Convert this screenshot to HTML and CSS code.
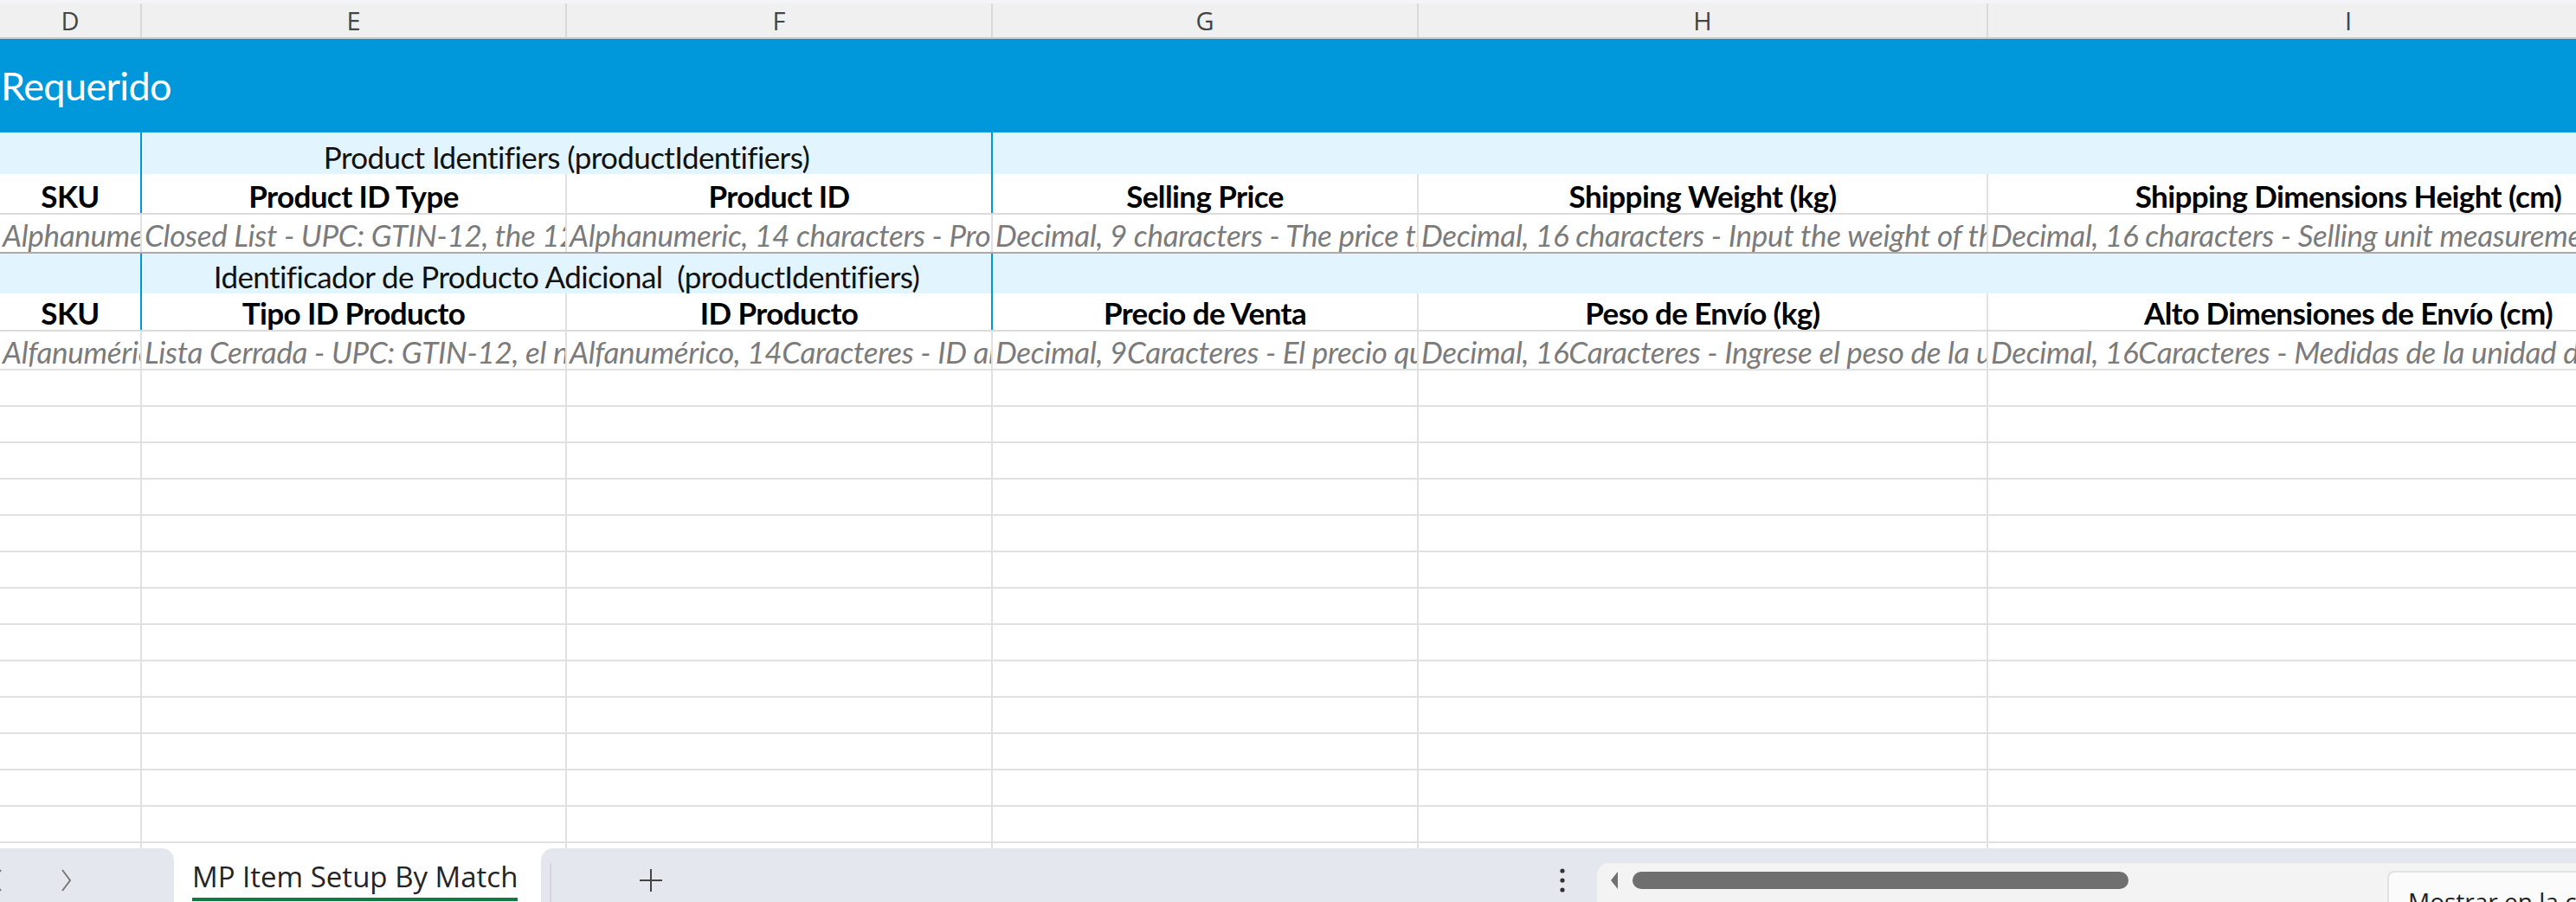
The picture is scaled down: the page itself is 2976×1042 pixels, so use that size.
FILE: index.html
```html
<!DOCTYPE html>
<html>
<head>
  <title>MP Item Setup By Match</title>
  <link rel="stylesheet" href="styles.css">
</head>
<body>

  <div class="sheet">
    <div class="colheads">
      <div class="ch">D</div>
      <div class="ch">E</div>
      <div class="ch">F</div>
      <div class="ch">G</div>
      <div class="ch">H</div>
      <div class="ch">I</div>
    </div>

    <div class="banner">Requerido</div>

    <div class="row group">
      <div class="cell edge"></div>
      <div class="cell span2 edge">Product Identifiers (productIdentifiers)</div>
      <div class="cell span3"></div>
    </div>
    <div class="row head">
      <div class="cell edge">SKU</div>
      <div class="cell">Product ID Type</div>
      <div class="cell edge">Product ID</div>
      <div class="cell">Selling Price</div>
      <div class="cell">Shipping Weight (kg)</div>
      <div class="cell">Shipping Dimensions Height (cm)</div>
    </div>
    <div class="row desc first">
      <div class="cell">Alphanumeric, 50 characters - A unique identifier for the item</div>
      <div class="cell">Closed List - UPC: GTIN-12, the 12-digit number including check-digit</div>
      <div class="cell">Alphanumeric, 14 characters - Product ID of the item</div>
      <div class="cell">Decimal, 9 characters - The price the customer pays for the product</div>
      <div class="cell">Decimal, 16 characters - Input the weight of the item in kilograms</div>
      <div class="cell">Decimal, 16 characters - Selling unit measurements, height of the package</div>
    </div>

    <div class="row group">
      <div class="cell edge"></div>
      <div class="cell span2 edge">Identificador de Producto Adicional&nbsp; (productIdentifiers)</div>
      <div class="cell span3"></div>
    </div>
    <div class="row head second">
      <div class="cell edge">SKU</div>
      <div class="cell">Tipo ID Producto</div>
      <div class="cell edge">ID Producto</div>
      <div class="cell">Precio de Venta</div>
      <div class="cell">Peso de Envío (kg)</div>
      <div class="cell">Alto Dimensiones de Envío (cm)</div>
    </div>
    <div class="row desc">
      <div class="cell">Alfanumérico, 50Caracteres - Identificador único del artículo</div>
      <div class="cell">Lista Cerrada - UPC: GTIN-12, el número de 12 dígitos</div>
      <div class="cell">Alfanumérico, 14Caracteres - ID alfanumérico del producto</div>
      <div class="cell">Decimal, 9Caracteres - El precio que paga el cliente</div>
      <div class="cell">Decimal, 16Caracteres - Ingrese el peso de la unidad en kilogramos</div>
      <div class="cell">Decimal, 16Caracteres - Medidas de la unidad de venta, alto del paquete</div>
    </div>

    <div class="row empty"><div class="cell"></div><div class="cell"></div><div class="cell"></div><div class="cell"></div><div class="cell"></div><div class="cell"></div></div>
    <div class="row empty"><div class="cell"></div><div class="cell"></div><div class="cell"></div><div class="cell"></div><div class="cell"></div><div class="cell"></div></div>
    <div class="row empty"><div class="cell"></div><div class="cell"></div><div class="cell"></div><div class="cell"></div><div class="cell"></div><div class="cell"></div></div>
    <div class="row empty"><div class="cell"></div><div class="cell"></div><div class="cell"></div><div class="cell"></div><div class="cell"></div><div class="cell"></div></div>
    <div class="row empty"><div class="cell"></div><div class="cell"></div><div class="cell"></div><div class="cell"></div><div class="cell"></div><div class="cell"></div></div>
    <div class="row empty"><div class="cell"></div><div class="cell"></div><div class="cell"></div><div class="cell"></div><div class="cell"></div><div class="cell"></div></div>
    <div class="row empty"><div class="cell"></div><div class="cell"></div><div class="cell"></div><div class="cell"></div><div class="cell"></div><div class="cell"></div></div>
    <div class="row empty"><div class="cell"></div><div class="cell"></div><div class="cell"></div><div class="cell"></div><div class="cell"></div><div class="cell"></div></div>
    <div class="row empty"><div class="cell"></div><div class="cell"></div><div class="cell"></div><div class="cell"></div><div class="cell"></div><div class="cell"></div></div>
    <div class="row empty"><div class="cell"></div><div class="cell"></div><div class="cell"></div><div class="cell"></div><div class="cell"></div><div class="cell"></div></div>
    <div class="row empty"><div class="cell"></div><div class="cell"></div><div class="cell"></div><div class="cell"></div><div class="cell"></div><div class="cell"></div></div>
    <div class="row empty"><div class="cell"></div><div class="cell"></div><div class="cell"></div><div class="cell"></div><div class="cell"></div><div class="cell"></div></div>
    <div class="row empty"><div class="cell"></div><div class="cell"></div><div class="cell"></div><div class="cell"></div><div class="cell"></div><div class="cell"></div></div>
    <div class="row empty"><div class="cell"></div><div class="cell"></div><div class="cell"></div><div class="cell"></div><div class="cell"></div><div class="cell"></div></div>
  </div>

  <div class="tabbar">
    <div class="nav">
      <svg class="prev" width="13" height="26" viewBox="0 0 13 26"><polyline points="11,1 2,13 11,25" /></svg>
      <svg class="next" width="13" height="26" viewBox="0 0 13 26"><polyline points="2,1 11,13 2,25" /></svg>
    </div>
    <div class="tab">
      <span class="tab-name">MP Item Setup By Match</span>
    </div>
    <div class="tabs-rest">
      <div class="sep"></div>
      <svg class="add" width="28" height="28" viewBox="0 0 28 28"><line x1="14" y1="1" x2="14" y2="27" /><line x1="1" y1="14" x2="27" y2="14" /></svg>
      <svg class="more" width="6" height="30" viewBox="0 0 6 30"><circle cx="3" cy="4" r="2.6" /><circle cx="3" cy="15" r="2.6" /><circle cx="3" cy="26" r="2.6" /></svg>
      <div class="hscroll">
        <svg class="arrow-left" width="10" height="20" viewBox="0 0 10 20"><polygon points="9,0 9,20 1,10" /></svg>
        <div class="thumb"></div>
        <div class="toast">Mostrar en la cuadrícula</div>
      </div>
    </div>
  </div>

</body>
</html>
```

FILE: styles.css
```css
body {
  margin: 0;
  overflow: hidden;
  background: #fff;
  font-family: Lato, "Liberation Sans", sans-serif;
}

.sheet {
  height: 980px;
  overflow: hidden;
}

.colheads,
.row {
  display: grid;
  grid-template-columns: 164px 491px 492px 492px 658px 834px;
  width: 3131px;
  box-sizing: border-box;
}

.colheads {
  height: 45px;
  background: #f0f0f0;
  border-top: 4px solid #f4f5f8;
  border-bottom: 2px solid #cacaca;
}

.ch {
  border-right: 2px solid #dadada;
  text-align: center;
  font-family: "Open Sans", sans-serif;
  font-size: 29px;
  line-height: 39px;
  color: #444;
}

.banner {
  height: 108px;
  background: #0098da;
  color: #fff;
  font-size: 45px;
  letter-spacing: -0.6px;
  display: flex;
  align-items: center;
  padding-left: 1px;
}

.cell {
  box-sizing: border-box;
  border-right: 2px solid #e1e1e1;
  overflow: hidden;
  white-space: nowrap;
  display: flex;
  align-items: flex-end;
  font-size: 35px;
  line-height: 40px;
  letter-spacing: -0.6px;
  padding: 0 3px;
}

.span2 {
  grid-column: span 2;
}

.span3 {
  grid-column: span 3;
}

.group {
  height: 48px;
  background: #e2f4fd;
}

.desc + .group {
  height: 46px;
}

.group .cell {
  border-right: none;
  justify-content: center;
  color: #111;
}

.group .edge,
.head .edge {
  border-right: 2px solid #0098da;
}

.head {
  height: 47px;
  border-bottom: 2px solid #dcdcdc;
}

.head.second {
  height: 44px;
}

.head .cell {
  font-weight: bold;
  justify-content: center;
  color: #000;
}

.desc {
  height: 45px;
  border-bottom: 2px solid #e1e1e1;
}

.desc.first {
  border-bottom-color: #ababab;
}

.desc .cell {
  font-style: italic;
  letter-spacing: -0.3px;
  color: #7b7b7b;
}

.empty {
  height: 42px;
  border-bottom: 2px solid #e1e1e1;
}

/* sheet tabs */

.tabbar {
  display: flex;
  height: 62px;
  background: #fff;
  overflow: hidden;
}

.nav {
  flex-shrink: 0;
  width: 201px;
  background: #e4e7ed;
  border-top-right-radius: 14px;
  display: flex;
  align-items: center;
  padding-top: 12px;
  box-sizing: border-box;
}

.nav svg {
  flex-shrink: 0;
}

.nav svg polyline {
  fill: none;
  stroke: #777;
  stroke-width: 2;
}

.prev {
  margin-left: -10px;
}

.next {
  margin-left: 67px;
}

.tab {
  flex-shrink: 0;
  width: 424px;
  padding-left: 21px;
  box-sizing: border-box;
  white-space: nowrap;
}

.tab-name {
  display: inline-block;
  margin-top: 16px;
  padding-bottom: 7px;
  border-bottom: 4px solid #107c41;
  font-family: "Open Sans", sans-serif;
  font-size: 33px;
  line-height: 34px;
  color: #242424;
}

.tabs-rest {
  flex: 1;
  min-width: 0;
  display: flex;
  background: #e4e7ed;
  border-top-left-radius: 14px;
}

.tabs-rest > * {
  flex-shrink: 0;
}

.sep {
  width: 2px;
  margin-left: 10px;
  margin-top: 17px;
  background: #d3d6dc;
}

.add {
  margin-left: 101px;
  margin-top: 23px;
}

.add line {
  stroke: #444;
  stroke-width: 2;
}

.more {
  margin-left: 1036px;
  margin-top: 22px;
  fill: #333;
}

.tabs-rest > .hscroll {
  flex: 1 0 auto;
  display: flex;
  align-items: flex-start;
  margin-left: 37px;
  margin-top: 17px;
  background: #f3f3f3;
  border-top-left-radius: 14px;
}

.hscroll > * {
  flex-shrink: 0;
}

.arrow-left {
  margin-left: 15px;
  margin-top: 10px;
  fill: #707070;
}

.thumb {
  width: 573px;
  height: 20px;
  margin-left: 16px;
  margin-top: 10px;
  border-radius: 10px;
  background: #6f6f6f;
}

.hscroll > .toast {
  flex: 1 0 auto;
  height: 60px;
  margin-left: 299px;
  margin-top: 9px;
  padding: 14px 0 0 22px;
  background: #fbfbfb;
  border: 2px solid #e2e2e2;
  border-right: none;
  border-top-left-radius: 8px;
  font-family: "Open Sans", sans-serif;
  font-size: 28px;
  line-height: 38px;
  color: #222;
  white-space: nowrap;
}
```
